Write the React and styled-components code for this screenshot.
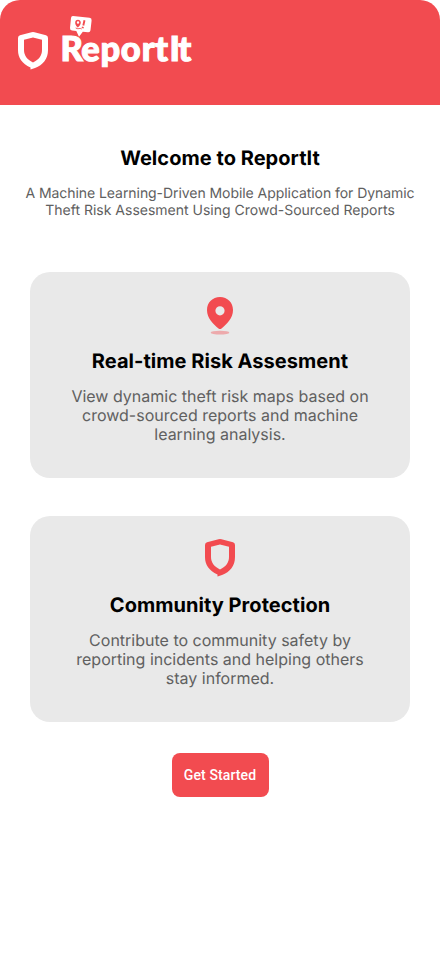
import React from "react";
import styled, { createGlobalStyle } from "styled-components";

const RED = "#f24b50";

const GlobalStyle = createGlobalStyle`
  * { box-sizing: border-box; }
  body { margin: 0; background: #fff; font-family: Inter, sans-serif; text-rendering: geometricPrecision; }
  h1, h2, p { margin: 0; }
`;

const Screen = styled.div`
  width: 440px;
  height: 956px;
  display: flex;
  flex-direction: column;
  align-items: center;
  background: #fff;
  overflow: hidden;
`;

const Header = styled.header`
  width: 100%;
  height: 105px;
  flex-shrink: 0;
  display: flex;
  align-items: flex-start;
  gap: 11px;
  padding: 10px 18px 0;
  border-radius: 20px 20px 0 0;
  background: ${RED};
`;

const Shield = styled.svg`
  display: block;
  flex-shrink: 0;
  width: 30px;
  height: 38px;
  margin-top: ${(p) => p.$top || 0}px;
  color: ${(p) => p.$color};
`;

const Wordmark = styled.svg`
  display: block;
  width: 138px;
  height: 64px;
  font-family: Lato, sans-serif;
  font-weight: 900;
`;

const Intro = styled.section`
  width: 100%;
  padding-top: 41px;
  height: 167px;
  text-align: center;
`;

const Title = styled.h2`
  font-size: 20px;
  line-height: 24px;
  font-weight: 700;
  letter-spacing: 0.04px;
  color: #000;
`;

const Body = styled.p`
  font-size: ${(p) => p.$size}px;
  line-height: ${(p) => p.$line}px;
  margin-top: ${(p) => p.$gap}px;
  color: #606060;
  white-space: pre-line;
`;

const Tight = styled.span`
  letter-spacing: -0.06px;
`;

const Cards = styled.main`
  display: flex;
  flex-direction: column;
  gap: 38px;
`;

const Card = styled.article`
  width: 380px;
  height: 206px;
  padding-top: 22px;
  display: flex;
  flex-direction: column;
  align-items: center;
  text-align: center;
  border-radius: 20px;
  background: #e9e9e9;
`;

const IconSlot = styled.div`
  height: 55px;
  flex-shrink: 0;
`;

const Pin = styled.svg`
  display: block;
  width: 26px;
  height: 38px;
  margin-top: 3px;
`;

const StartButton = styled.button`
  width: 97px;
  height: 44px;
  margin-top: 31px;
  padding: 0;
  border: 0;
  border-radius: 8px;
  background: ${RED};
  color: #fff;
  font: 500 14px/20px Roboto, sans-serif;
  letter-spacing: 0.1px;
`;

function ShieldIcon({ color, top }) {
  return (
    <Shield viewBox="0 0 30 38" $color={color} $top={top}>
      <path
        fill="currentColor"
        fillRule="evenodd"
        d="M13.500 .3 Q15 -.1 16.500 .3 L28 3.300 Q30 4 30 6 V18 C30 27 25 33 17 36 L12.500 37.500 V35.500 C4 31.500 0 26 0 18 V6 Q0 4 2 3.300 Z M15 5.500 L6 7.800 V18 C6 23.500 9 27.500 15 30.500 C21 27.500 24 23.500 24 18 V7.800 Z"
      />
    </Shield>
  );
}

function PinIcon() {
  return (
    <Pin viewBox="0 0 26 38">
      <path
        fill={RED}
        fillRule="evenodd"
        d="M13 0C5.500 0 0 5.500 0 13C0 21 6 27 11.500 31.500Q13 32.700 14.500 31.500C20 27 26 21 26 13C26 5.500 20.500 0 13 0Z M13 9.200A4.600 4.600 0 1 1 13 18.400A4.600 4.600 0 1 1 13 9.200Z"
      />
      <ellipse cx="13" cy="35.700" rx="9.300" ry="1.900" fill={RED} opacity=".4" />
    </Pin>
  );
}

function Logo() {
  return (
    <Wordmark viewBox="59 10 138 64">
      <text x="60.500 81.300 100.400 120.800 141.800 155 169.500 178.200" y="61" fontSize="34.500" fill="#fff" stroke="#fff" strokeWidth="1.100">
        ReportIt
      </text>
      <path
        fill="#fff"
        d="M73 15.900 L89.500 17.800 Q91.900 18.100 91.600 20.500 L90.500 30.300 Q90.200 32.500 88 32.300 L82.800 31.700 L79 36.700 L76.300 31 L72 30.500 Q69.800 30.200 70 28 L71 18 Q71.200 15.800 73 15.900Z"
      />
      <path
        fill={RED}
        fillRule="evenodd"
        d="M77.700 27.500 C75.500 25 75 23.700 75.200 22.200 C75.600 18.800 80.900 19.100 80.800 22.700 C80.700 24.500 79.500 26 77.700 27.500Z M78 21.300 A1.200 1.200 0 1 0 78 23.700 A1.200 1.200 0 1 0 78 21.300Z"
      />
      <g fill="none" stroke={RED}>
        <path strokeWidth="1.900" d="M84.500 20.200 L83.300 25.500 M82.900 26.700 L82.600 28.200" />
        <path strokeWidth=".8" d="M76 27.500 Q75.500 28.900 78 28.700 Q80.500 28 81.800 29" />
      </g>
    </Wordmark>
  );
}

export default function App() {
  return (
    <>
      <GlobalStyle />
      <Screen>
        <Header>
          <ShieldIcon color="#fff" top={22} />
          <Logo />
        </Header>
        <Intro>
          <Title as="h1">Welcome to ReportIt</Title>
          <Body $size={14} $line={17} $gap={15}>
            <Tight>A Machine Learning-Driven Mobile Application for Dynamic</Tight>
            {"\nTheft Risk Assesment Using Crowd-Sourced Reports"}
          </Body>
        </Intro>
        <Cards>
          <Card>
            <IconSlot><PinIcon /></IconSlot>
            <Title>Real-time Risk Assesment</Title>
            <Body $size={16} $line={19} $gap={14}>
              {"View dynamic theft risk maps based on\ncrowd-sourced reports and machine\nlearning analysis."}
            </Body>
          </Card>
          <Card>
            <IconSlot><ShieldIcon color={RED} top={1} /></IconSlot>
            <Title>Community Protection</Title>
            <Body $size={16} $line={19} $gap={14}>
              {"Contribute to community safety by\nreporting incidents and helping others\nstay informed."}
            </Body>
          </Card>
        </Cards>
        <StartButton>Get Started</StartButton>
      </Screen>
    </>
  );
}
